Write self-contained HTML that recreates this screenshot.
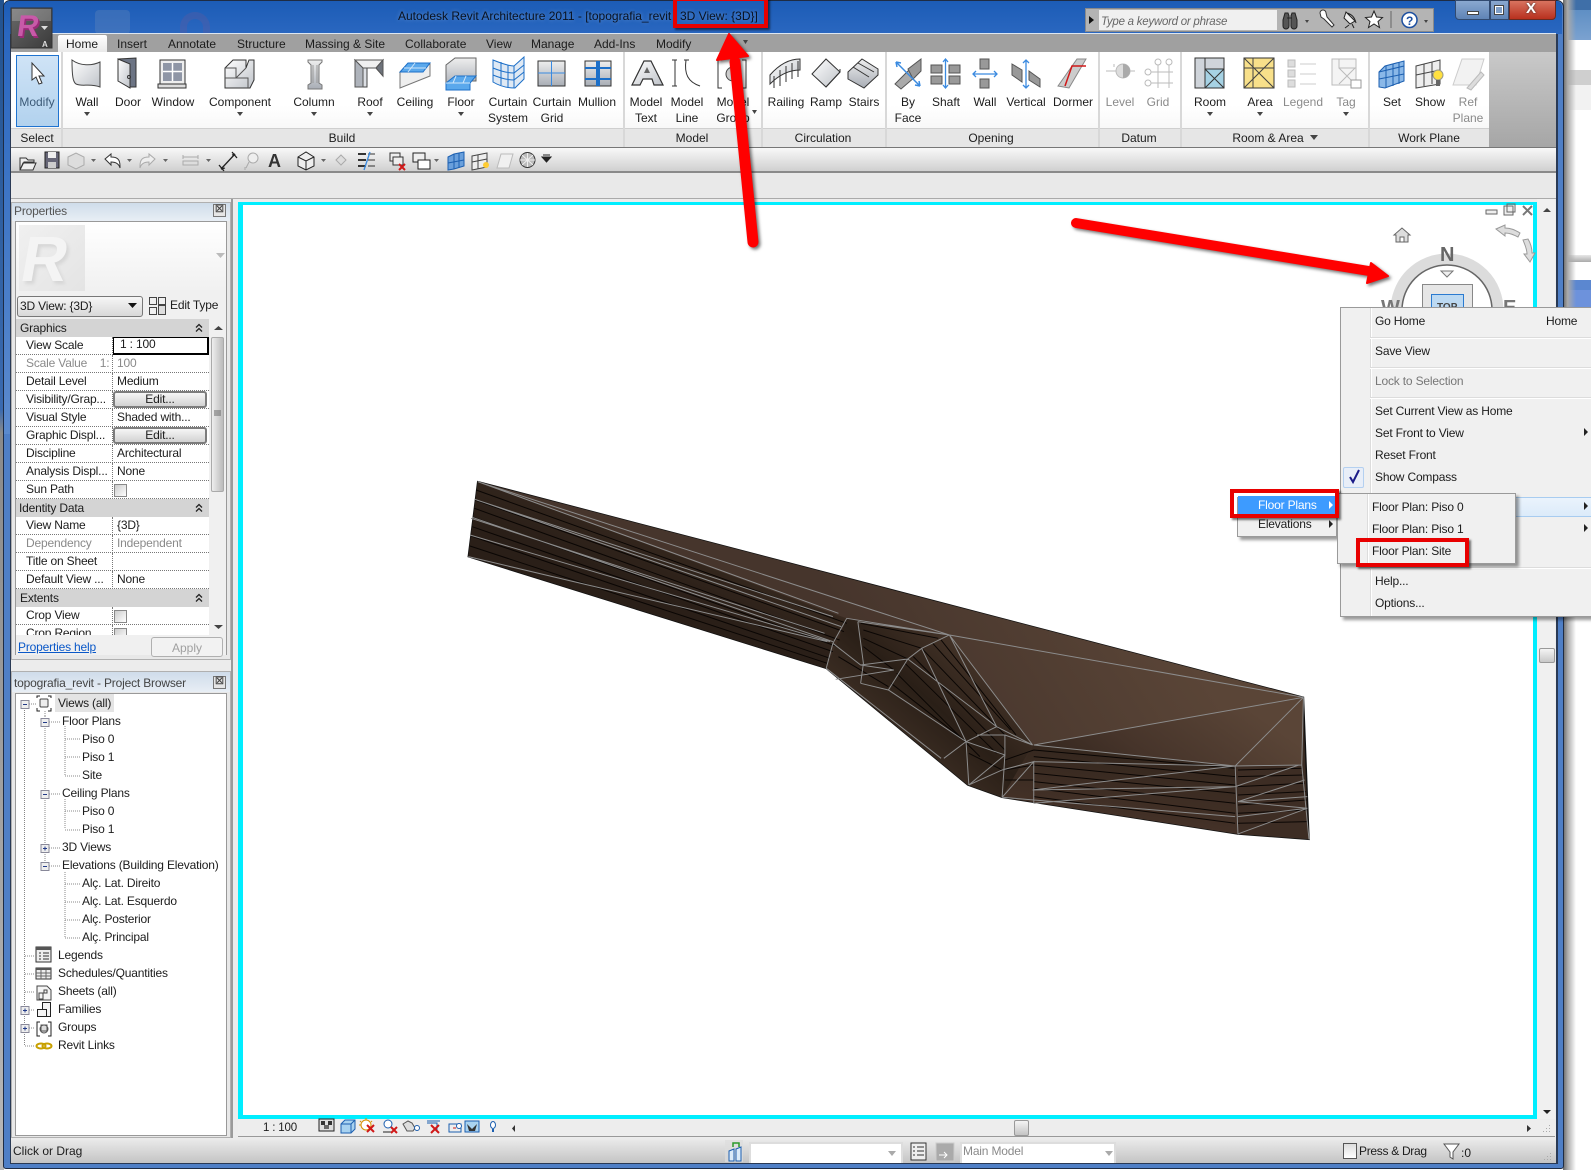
<!DOCTYPE html>
<html><head><meta charset="utf-8"><title>Revit</title>
<style>
html,body{margin:0;padding:0}
body{width:1591px;height:1170px;overflow:hidden;position:relative;background:#fff;font:12px/14px "Liberation Sans",sans-serif;color:#1c1c1c}
div,span,svg{position:absolute}
svg{left:0;top:0}
.t{white-space:nowrap}
.n{letter-spacing:-.18px}
.c{transform:translateX(-50%);text-align:center;white-space:nowrap}
.g{color:#8a8a8a}
.r{left:16px;width:193px;height:17px;border-bottom:1px dotted #777;background:#fff;letter-spacing:-.18px}
.r i{position:absolute;left:96px;top:0;height:18px;border-left:1px dotted #777}
.r .l{left:10px;top:1px;white-space:nowrap}
.r .v{left:101px;top:1px;white-space:nowrap}
.h{left:16px;width:193px;height:18px;background:#d4d4d4;letter-spacing:-.18px}
.h .l{left:4px;top:2px}
.e{left:97px;top:0;width:90px;height:13px;border:2px solid #7c7c7c;border-radius:3px;background:linear-gradient(#f6f6f6,#d2d2d2);text-align:center;line-height:13px}
.k{left:98px;top:3px;width:11px;height:11px;border:1px solid #888;background:linear-gradient(135deg,#ccc,#fff)}
.m{left:1375px;white-space:nowrap;letter-spacing:-.18px}
.s{left:1370px;width:221px;height:1px;background:#dcdcdc;border-bottom:1px solid #fff}
.rb{border:4px solid #e80000;box-shadow:2px 2px 2px rgba(0,0,0,.55);box-sizing:border-box}
</style></head><body>

<!-- right background window -->
<div style="left:1564px;top:0;width:27px;height:14px;background:#3f6fa8"></div>
<div style="left:1564px;top:10px;width:27px;height:30px;background:linear-gradient(#5f8fc4,#7ba2d0)"></div>
<div style="left:1564px;top:40px;width:27px;height:30px;background:#fff"></div>
<div style="left:1564px;top:70px;width:27px;height:15px;background:#cfcfcf"></div>
<div style="left:1564px;top:85px;width:27px;height:25px;background:#f2f2f2"></div>
<div style="left:1564px;top:255px;width:27px;height:7px;background:linear-gradient(#e8e8e8,#aaa)"></div>
<div style="left:1564px;top:280px;width:27px;height:10px;background:#5b87d0"></div>
<div style="left:1564px;top:290px;width:27px;height:18px;background:#6d92dc"></div>
<div style="left:1563px;top:0;width:13px;height:1170px;background:linear-gradient(90deg,#666,#aaa 35%,rgba(255,255,255,0))"></div>
<!-- left desktop -->
<div style="left:0;top:0;width:4px;height:1170px;background:linear-gradient(#23538f,#3a6ab0 35%,#8a8a8a 37%,#b8b8b8)"></div>

<!-- window frame -->
<div style="left:3px;top:0;width:1559px;height:1167px;background:#4f7fc6;border:1px solid #1e2c44;border-radius:7px 7px 3px 3px"></div>
<div style="left:4px;top:1px;width:1558px;height:33px;background:linear-gradient(#1c5cb6,#2a67c0);border-radius:6px 6px 0 0"></div>
<div style="left:4px;top:34px;width:7px;height:400px;background:linear-gradient(#2a67c0,#5b8ace)"></div>
<div style="left:1556px;top:34px;width:2px;height:1130px;background:#2a3a55"></div>
<div style="left:10px;top:34px;width:1px;height:1130px;background:#2a3a55"></div>
<div style="left:10px;top:1163px;width:1548px;height:1px;background:#2a3a55"></div>
<!-- glass ghosts -->
<div style="left:95px;top:10px;width:35px;height:24px;background:#6f8fb8;opacity:.3;border-radius:4px"></div>
<div style="left:180px;top:12px;width:30px;height:22px;border:7px solid #6a5a9a;border-bottom:0;border-radius:24px 24px 0 0;opacity:.3;box-sizing:border-box"></div>

<!-- title -->
<div class="t" style="left:398px;top:9px;color:#0a1220;text-shadow:0 0 4px rgba(120,165,220,.8)">Autodesk Revit Architecture 2011 - [topografia_revit</div>
<div class="t" style="left:680px;top:9px;color:#0a1220;text-shadow:0 0 4px rgba(120,165,220,.8)">3D View: {3D}]</div>

<!-- window controls -->
<div style="left:1455px;top:0;width:35px;height:20px;background:linear-gradient(#8aa8d0,#5f84b6);border:1px solid #314a70;box-sizing:border-box;border-radius:0 0 0 4px"></div>
<div style="left:1490px;top:0;width:19px;height:20px;background:linear-gradient(#8aa8d0,#5f84b6);border:1px solid #314a70;box-sizing:border-box"></div>
<div style="left:1509px;top:0;width:47px;height:20px;background:linear-gradient(#d8735f,#b8301e);border:1px solid #6a2a20;box-sizing:border-box;border-radius:0 0 4px 0"></div>
<div style="left:1467px;top:11px;width:10px;height:2px;background:#fff;border:1px solid #444"></div>
<div style="left:1495px;top:6px;width:6px;height:6px;border:1px solid #fff;outline:1px solid #444;background:#7f9fc8"></div>
<div class="t" style="left:1526px;top:2px;color:#fff;font-weight:bold;font-size:15px;text-shadow:0 0 2px #333">X</div>

<!-- search bar -->
<div style="left:1085px;top:8px;width:349px;height:24px;background:#b4b4b4;border:1px solid #8a8a8a;box-sizing:border-box"></div>
<div style="left:1099px;top:10px;width:178px;height:20px;background:#f0f0f0"></div>
<div class="t" style="left:1101px;top:15px;font-style:italic;font-size:11.5px;color:#666;letter-spacing:-.25px">Type a keyword or phrase</div>

<!-- tabs + ribbon -->
<div style="left:11px;top:33px;width:1545px;height:19px;background:#a0a0a0;border-top:1px solid #dce6f2;box-sizing:border-box"></div>
<div style="left:58px;top:35px;width:49px;height:18px;background:linear-gradient(#fff,#e8e8e8);border-radius:2px 2px 0 0"></div>
<div class="t" style="left:66px;top:37px">Home</div>
<div class="t" style="left:117px;top:37px">Insert</div>
<div class="t" style="left:168px;top:37px">Annotate</div>
<div class="t" style="left:237px;top:37px">Structure</div>
<div class="t" style="left:305px;top:37px">Massing &amp; Site</div>
<div class="t" style="left:405px;top:37px">Collaborate</div>
<div class="t" style="left:486px;top:37px">View</div>
<div class="t" style="left:531px;top:37px">Manage</div>
<div class="t" style="left:594px;top:37px">Add-Ins</div>
<div class="t" style="left:656px;top:37px">Modify</div>

<div style="left:11px;top:52px;width:1478px;height:76px;background:linear-gradient(#fff 70%,#f8f8f8)"></div>
<div style="left:11px;top:128px;width:1478px;height:19px;background:#e6e6e6;border-top:1px solid #cfcfcf;box-sizing:border-box"></div>
<div style="left:1489px;top:52px;width:67px;height:95px;background:linear-gradient(#c9c9c9,#a6a6a6)"></div>
<div style="left:61px;top:52px;width:2px;height:95px;background:#d8d8d8"></div>
<div style="left:623px;top:52px;width:2px;height:95px;background:#d8d8d8"></div>
<div style="left:761px;top:52px;width:2px;height:95px;background:#d8d8d8"></div>
<div style="left:885px;top:52px;width:2px;height:95px;background:#d8d8d8"></div>
<div style="left:1098px;top:52px;width:2px;height:95px;background:#d8d8d8"></div>
<div style="left:1180px;top:52px;width:2px;height:95px;background:#d8d8d8"></div>
<div style="left:1368px;top:52px;width:2px;height:95px;background:#d8d8d8"></div>
<div style="left:16px;top:55px;width:43px;height:72px;background:linear-gradient(#cfe3f6,#b2d2ee);border:1px solid #1f73d0;box-sizing:border-box"></div>

<!-- ribbon labels -->
<div class="c g" style="left:37px;top:95px;color:#3c5a78">Modify</div>
<div class="c" style="left:87px;top:95px">Wall</div>
<div class="c" style="left:128px;top:95px">Door</div>
<div class="c" style="left:173px;top:95px">Window</div>
<div class="c" style="left:240px;top:95px">Component</div>
<div class="c" style="left:314px;top:95px">Column</div>
<div class="c" style="left:370px;top:95px">Roof</div>
<div class="c" style="left:415px;top:95px">Ceiling</div>
<div class="c" style="left:461px;top:95px">Floor</div>
<div class="c" style="left:508px;top:95px">Curtain<br><span style="position:static;line-height:18px">System</span></div>
<div class="c" style="left:552px;top:95px">Curtain<br><span style="position:static;line-height:18px">Grid</span></div>
<div class="c" style="left:597px;top:95px">Mullion</div>
<div class="c" style="left:646px;top:95px">Model<br><span style="position:static;line-height:18px">Text</span></div>
<div class="c" style="left:687px;top:95px">Model<br><span style="position:static;line-height:18px">Line</span></div>
<div class="c" style="left:733px;top:95px">Model<br><span style="position:static;line-height:18px">Group</span></div>
<div class="c" style="left:786px;top:95px">Railing</div>
<div class="c" style="left:826px;top:95px">Ramp</div>
<div class="c" style="left:864px;top:95px">Stairs</div>
<div class="c" style="left:908px;top:95px">By<br><span style="position:static;line-height:18px">Face</span></div>
<div class="c" style="left:946px;top:95px">Shaft</div>
<div class="c" style="left:985px;top:95px">Wall</div>
<div class="c" style="left:1026px;top:95px">Vertical</div>
<div class="c" style="left:1073px;top:95px">Dormer</div>
<div class="c g" style="left:1120px;top:95px">Level</div>
<div class="c g" style="left:1158px;top:95px">Grid</div>
<div class="c" style="left:1210px;top:95px">Room</div>
<div class="c" style="left:1260px;top:95px">Area</div>
<div class="c g" style="left:1303px;top:95px">Legend</div>
<div class="c g" style="left:1346px;top:95px">Tag</div>
<div class="c" style="left:1392px;top:95px">Set</div>
<div class="c" style="left:1430px;top:95px">Show</div>
<div class="c g" style="left:1468px;top:95px">Ref<br><span style="position:static;line-height:18px">Plane</span></div>

<!-- panel titles -->
<div class="c" style="left:37px;top:131px">Select</div>
<div class="c" style="left:342px;top:131px">Build</div>
<div class="c" style="left:692px;top:131px">Model</div>
<div class="c" style="left:823px;top:131px">Circulation</div>
<div class="c" style="left:991px;top:131px">Opening</div>
<div class="c" style="left:1139px;top:131px">Datum</div>
<div class="c" style="left:1268px;top:131px">Room &amp; Area</div>
<div class="c" style="left:1429px;top:131px">Work Plane</div>

<!-- QAT and band -->
<div style="left:11px;top:147px;width:1545px;height:26px;background:linear-gradient(#f8f8f8,#d0d0d0);border-top:1px solid #777;border-bottom:2px solid #8a8a8a;box-sizing:border-box"></div>
<div style="left:11px;top:173px;width:1545px;height:26px;background:#e9e9e9;border-bottom:1px solid #aaa;box-sizing:border-box"></div>

<!-- main area -->
<div style="left:11px;top:199px;width:1545px;height:939px;background:#ececec"></div>
<div style="left:231px;top:199px;width:2px;height:939px;background:#9a9a9a"></div>
<div style="left:238px;top:202px;width:1299px;height:917px;background:#00eeff"></div>
<div style="left:243px;top:205px;width:1290px;height:910px;background:#fff"></div>
<!-- v scroll -->
<div style="left:1537px;top:199px;width:18px;height:920px;background:#f0f0f0"></div>
<div style="left:1539px;top:648px;width:14px;height:13px;background:linear-gradient(#f4f4f4,#c8c8c8);border:1px solid #999;border-radius:2px"></div>
<!-- h scroll -->
<div style="left:238px;top:1119px;width:1317px;height:18px;background:#ededed;border-bottom:1px solid #999;box-sizing:border-box"></div>
<div style="left:1014px;top:1120px;width:13px;height:14px;background:linear-gradient(#f4f4f4,#c4c4c4);border:1px solid #999;border-radius:2px"></div>
<div class="t n" style="left:263px;top:1121px;font-size:11.5px">1 : 100</div>

<!-- status bar -->
<div style="left:11px;top:1138px;width:1545px;height:25px;background:linear-gradient(#ececec,#c4c4c4)"></div>
<div class="t" style="left:13px;top:1144px">Click or Drag</div>
<div style="left:749px;top:1142px;width:154px;height:21px;background:#fff;border:2px solid #ddd;border-bottom:0;box-sizing:border-box"></div>
<div style="left:960px;top:1142px;width:156px;height:21px;background:#fff;border:2px solid #ddd;border-bottom:0;box-sizing:border-box"></div>
<div class="t g n" style="left:963px;top:1144px">Main Model</div>
<div style="left:1343px;top:1143px;width:12px;height:14px;background:linear-gradient(#ddd,#fff);border:1px solid #555"></div>
<div class="t" style="left:1359px;top:1144px;letter-spacing:-.3px">Press &amp; Drag</div>
<div class="t" style="left:1461px;top:1146px">:0</div>

<!-- properties panel -->
<div style="left:11px;top:202px;width:220px;height:458px;background:#e8e8e8;border:1px solid #b0b0b0;box-sizing:border-box"></div>
<div style="left:12px;top:203px;width:218px;height:18px;background:linear-gradient(#cfdcea,#e8eef5)"></div>
<div class="t n" style="left:14px;top:204px;color:#555">Properties</div>
<div style="left:213px;top:204px;width:11px;height:11px;border:1px solid #777;background:#e6e6e6;font:bold 10px/10px 'Liberation Sans';text-align:center;color:#444">☒</div>
<div style="left:15px;top:221px;width:212px;height:434px;background:#f0f0f0;border:1px solid #999;box-sizing:border-box"></div>
<div style="left:16px;top:222px;width:210px;height:71px;background:linear-gradient(#fff,#f0f0f0)"></div>
<div style="left:19px;top:225px;width:66px;height:66px;background:linear-gradient(135deg,#f0f0f0,#e4e4e4)"></div>
<div class="t" style="left:22px;top:226px;font:bold 64px/66px 'Liberation Sans';color:#f4f4f4;transform:skewX(-10deg);text-shadow:3px 3px 3px #d6d6d6">R</div>
<div style="left:17px;top:296px;width:126px;height:21px;background:linear-gradient(#f6f6f6,#d8d8d8);border:1px solid #777;border-radius:3px;box-sizing:border-box"></div>
<div class="t n" style="left:20px;top:299px">3D View: {3D}</div>
<div class="t n" style="left:170px;top:298px">Edit Type</div>

<div class="h" style="top:319px"><span class="l">Graphics</span></div>
<div class="r" style="top:337px"><i></i><span class="l">View Scale</span></div>
<div style="left:113px;top:337px;width:93px;height:15px;background:#fff;border:1px solid #000;border-width:1px 2px 2px 1px"><span class="t n" style="left:6px;top:-1px">1 : 100</span></div>
<div class="r g" style="top:355px"><i></i><span class="l">Scale Value &nbsp; &nbsp;1:</span><span class="v">100</span></div>
<div class="r" style="top:373px"><i></i><span class="l">Detail Level</span><span class="v">Medium</span></div>
<div class="r" style="top:391px"><i></i><span class="l">Visibility/Grap...</span><span class="e">Edit...</span></div>
<div class="r" style="top:409px"><i></i><span class="l">Visual Style</span><span class="v">Shaded with...</span></div>
<div class="r" style="top:427px"><i></i><span class="l">Graphic Displ...</span><span class="e">Edit...</span></div>
<div class="r" style="top:445px"><i></i><span class="l">Discipline</span><span class="v">Architectural</span></div>
<div class="r" style="top:463px"><i></i><span class="l">Analysis Displ...</span><span class="v">None</span></div>
<div class="r" style="top:481px"><i></i><span class="l">Sun Path</span><span class="k"></span></div>
<div class="h" style="top:499px"><span class="l" style="left:3px">Identity Data</span></div>
<div class="r" style="top:517px"><i></i><span class="l">View Name</span><span class="v">{3D}</span></div>
<div class="r g" style="top:535px"><i></i><span class="l">Dependency</span><span class="v">Independent</span></div>
<div class="r" style="top:553px"><i></i><span class="l">Title on Sheet</span></div>
<div class="r" style="top:571px"><i></i><span class="l">Default View ...</span><span class="v">None</span></div>
<div class="h" style="top:589px"><span class="l">Extents</span></div>
<div class="r" style="top:607px"><i></i><span class="l">Crop View</span><span class="k"></span></div>
<div class="n" style="left:16px;top:625px;width:193px;height:10px;overflow:hidden;background:#fff"><span style="left:96px;top:0;height:10px;border-left:1px dotted #777"></span><span class="t" style="left:10px;top:1px">Crop Region</span><span class="k"></span></div>
<!-- props scrollbar -->
<div style="left:209px;top:319px;width:17px;height:316px;background:#f0f0f0"></div>
<div style="left:211px;top:337px;width:13px;height:155px;background:linear-gradient(90deg,#eee,#bbb);border:1px solid #aaa;border-radius:2px;box-sizing:border-box"></div>
<div style="left:16px;top:635px;width:210px;height:20px;background:#f0f0f0"></div>
<div class="t n" style="left:18px;top:640px;color:#0a58c8;text-decoration:underline">Properties help</div>
<div style="left:151px;top:637px;width:72px;height:20px;background:#f2f2f2;border:1px solid #b0b0b0;border-radius:3px;box-sizing:border-box;text-align:center;color:#a0a0a0;line-height:20px">Apply</div>

<!-- project browser -->
<div style="left:11px;top:671px;width:220px;height:467px;background:#e8e8e8;border:1px solid #b0b0b0;box-sizing:border-box"></div>
<div style="left:12px;top:672px;width:218px;height:20px;background:linear-gradient(#cfdcea,#e8eef5)"></div>
<div class="t n" style="left:14px;top:676px;color:#444">topografia_revit - Project Browser</div>
<div style="left:213px;top:676px;width:11px;height:11px;border:1px solid #777;background:#e6e6e6;font:bold 10px/10px 'Liberation Sans';text-align:center;color:#444">☒</div>
<div style="left:15px;top:693px;width:212px;height:443px;background:#fff;border:1px solid #999;box-sizing:border-box"></div>
<div style="left:55px;top:694px;width:59px;height:18px;background:#e4e4e4"></div>
<div class="t n" style="left:58px;top:696px">Views (all)</div>
<div class="t n" style="left:62px;top:714px">Floor Plans</div>
<div class="t n" style="left:82px;top:732px">Piso 0</div>
<div class="t n" style="left:82px;top:750px">Piso 1</div>
<div class="t n" style="left:82px;top:768px">Site</div>
<div class="t n" style="left:62px;top:786px">Ceiling Plans</div>
<div class="t n" style="left:82px;top:804px">Piso 0</div>
<div class="t n" style="left:82px;top:822px">Piso 1</div>
<div class="t n" style="left:62px;top:840px">3D Views</div>
<div class="t n" style="left:62px;top:858px">Elevations (Building Elevation)</div>
<div class="t n" style="left:82px;top:876px">Alç. Lat. Direito</div>
<div class="t n" style="left:82px;top:894px">Alç. Lat. Esquerdo</div>
<div class="t n" style="left:82px;top:912px">Alç. Posterior</div>
<div class="t n" style="left:82px;top:930px">Alç. Principal</div>
<div class="t n" style="left:58px;top:948px">Legends</div>
<div class="t n" style="left:58px;top:966px">Schedules/Quantities</div>
<div class="t n" style="left:58px;top:984px">Sheets (all)</div>
<div class="t n" style="left:58px;top:1002px">Families</div>
<div class="t n" style="left:58px;top:1020px">Groups</div>
<div class="t n" style="left:58px;top:1038px">Revit Links</div>

<!-- icon overlay -->
<svg width="1591" height="1170" viewBox="0 0 1591 1170" fill="none">
<defs>
<linearGradient id="a" x1="0" y1="0" x2="1" y2="1"><stop offset="0" stop-color="#fff"/><stop offset="1" stop-color="#bfc3c9"/></linearGradient>
<linearGradient id="b" x1="0" y1="0" x2="0" y2="1"><stop offset="0" stop-color="#eee"/><stop offset="1" stop-color="#a8adb5"/></linearGradient>
<linearGradient id="p" x1="0" y1="0" x2="1" y2="1"><stop offset="0" stop-color="#6a6a6a"/><stop offset="1" stop-color="#3a3a3a"/></linearGradient>
</defs>
<!-- app button -->
<rect x="11" y="8" width="41" height="40" fill="url(#p)" stroke="#333"/>
<rect x="12" y="9" width="39" height="12" fill="#fff" opacity=".22"/>
<text x="15" y="38" font-family="Liberation Sans" font-size="30" font-weight="bold" fill="#9a2a78" transform="skewX(-8) translate(8 0)">R</text>
<text x="13" y="36" font-family="Liberation Sans" font-size="30" font-weight="bold" fill="#c85aa8" transform="skewX(-8) translate(8 0)">R</text>
<path d="M41 26h7l-3.500 4z" fill="#ddd"/>
<text x="42" y="47" font-family="Liberation Sans" font-size="8" font-weight="bold" fill="#ddd">A</text>
<!-- Modify cursor -->
<path d="M32 63v17l4-3 3 7 3-1-3-7h5z" fill="#fff" stroke="#333"/>
<!-- wall -->
<path d="M72 60c8 6 20 6 28 2v25c-10-4-18 0-24-3-3-2-4-8-4-24z" fill="url(#a)" stroke="#444"/>
<!-- door -->
<path d="M118 59l18-1v29h-6z" fill="#6c7484" stroke="#333"/><path d="M118 59l12 5v24l-12-7z" fill="url(#a)" stroke="#333"/><circle cx="129" cy="77" r="1.500" stroke="#333"/>
<!-- window -->
<rect x="160" y="60" width="25" height="24" fill="#eee" stroke="#333"/><rect x="163" y="63" width="19" height="18" fill="#8f96a6"/><path d="M172.500 63v18M163 71.500h19" stroke="#fff" stroke-width="1.500"/><rect x="158" y="84" width="28" height="4" fill="#ddd" stroke="#333"/>
<!-- component -->
<path d="M225 68l8-8h13v8l3-8h5v20l-4 8h-25z" fill="url(#a)" stroke="#333"/><path d="M225 68h11v10h-11M236 78l10-10M225 78h23v10" stroke="#555"/>
<!-- column -->
<path d="M308 60h14v2l-3 3v18l3 2v4h-14v-4l3-2V65l-3-3z" fill="url(#b)" stroke="#777"/><path d="M313 65v18M317 65v18" stroke="#999"/>
<!-- roof -->
<path d="M355 60h28v16l-7-8h-9v19h-12z" fill="#dcdfe4" stroke="#444"/><path d="M355 60l8 8v19h-8z" fill="#aeb3bb" stroke="#555"/><path d="M355 60h28l-7 8h-13z" fill="#f0f0f0" stroke="#555"/><path d="M383 60v16l-7-8z" fill="#6d727a" stroke="#555"/>
<!-- ceiling -->
<path d="M400 72l30-8v12l-30 12z" fill="#eee" stroke="#777"/><path d="M400 72l8-9h22l-7 9z" fill="#5aa8ec" stroke="#1c6fc8"/><path d="M415 63l-7 9M404 68h22" stroke="#cfe6fa"/>
<!-- floor -->
<path d="M446 65l9-7h21v23h-22l-8 6z" fill="url(#b)" stroke="#666"/><path d="M446 83l9-7h21l-6 7v7h-24z" fill="#5aa8ec" stroke="#1c6fc8"/><path d="M446 83h24M456 76l-3 7M466 76l-3 7" stroke="#cfe6fa"/>
<!-- curtain system -->
<path d="M493 60q15 6 21 6l10-9v22l-9 9q-12 0-22-6z" fill="#dfe9f4" stroke="#1c6fc8"/><path d="M493 68q12 5 21 5l10-8M493 75q12 5 21 5l10-8M501 62v23M508 65v23M514 66v22" stroke="#1c6fc8"/>
<!-- curtain grid -->
<rect x="538" y="61" width="27" height="25" fill="url(#b)" stroke="#333"/><path d="M551.500 61v25M538 73h27" stroke="#3a8ae0"/>
<!-- mullion -->
<rect x="585" y="61" width="26" height="25" fill="url(#b)" stroke="#333"/><path d="M585 68h26M585 79h26" stroke="#1c6fc8" stroke-width="2"/><path d="M598 61v25" stroke="#1c6fc8" stroke-width="4"/>
<!-- model text -->
<path d="M632 85l12-24h7l12 24h-9l-2-6h-9l-3 6z" fill="url(#a)" stroke="#333" stroke-width="1.200"/><path d="M644 73l3-6 3 6z" fill="#666"/>
<!-- model line -->
<path d="M675 60v26M686 60c-2 14 2 22 14 26" stroke="#333"/><path d="M672 60h5M672 86h5M684 60h5" stroke="#333"/>
<!-- model group -->
<path d="M722 60h-4v28h4M742 60h4v28h-4" stroke="#333"/><circle cx="733" cy="74" r="7" fill="#ccc" stroke="#444"/>
<!-- railing -->
<path d="M770 75q14-16 30-16v11q-16 0-30 14z" fill="url(#a)" stroke="#333"/><path d="M774 76v12M780 70v16M786 66v16M792 63v16M798 61v16" stroke="#333"/>
<!-- ramp -->
<path d="M812 74l14-15 14 13-14 15z" fill="url(#a)" stroke="#333"/><path d="M826 87l14-15v-3" stroke="#333"/>
<!-- stairs -->
<path d="M848 72l14-13 16 10v6l-14 13-16-9z" fill="url(#b)" stroke="#333"/><path d="M853 67l16 10M858 63l16 9" stroke="#333"/>
<!-- by face -->
<path d="M895 84l14-14 6 7-14 12z" fill="#aaa" stroke="#555"/><path d="M908 69l13-10v12l-8 8z" fill="#999" stroke="#555"/><path d="M896 62l24 24M896 62l5 1M896 62l1 5M920 86l-5-1M920 86l-1-5" stroke="#3a8ae0" stroke-width="1.500"/>
<!-- shaft -->
<path d="M945.500 59v29M943 62l2.500-3 2.500 3M943 85l2.500 3 2.500-3" stroke="#3a8ae0" stroke-width="1.300"/><rect x="931" y="65" width="11" height="8" fill="#999" stroke="#555"/><rect x="949" y="65" width="11" height="8" fill="#999" stroke="#555"/><rect x="931" y="76" width="11" height="8" fill="#999" stroke="#555"/><rect x="949" y="76" width="11" height="8" fill="#999" stroke="#555"/>
<!-- wall opening -->
<rect x="980" y="59" width="9" height="10" fill="#999" stroke="#555"/><rect x="980" y="79" width="9" height="9" fill="#999" stroke="#555"/><path d="M973 74h24M976 71l-3 3 3 3M994 71l3 3-3 3" stroke="#3a8ae0" stroke-width="1.300"/>
<!-- vertical -->
<path d="M1012 64l10 6v12l-10-7zM1029 71l11 8v8l-11-7z" fill="#999" stroke="#555"/><path d="M1026 60v28M1023 63l3-3 3 3M1023 85l3 3 3-3" stroke="#3a8ae0" stroke-width="1.300"/>
<!-- dormer -->
<path d="M1058 86l19-27h9l-17 29z" fill="#ccc" stroke="#888"/><path d="M1065 86l7-20h14" stroke="#d01818" stroke-width="1.500"/>
<!-- level -->
<path d="M1106 71h12M1128 71h7M1114 64v3" stroke="#bbb"/><circle cx="1123" cy="71" r="7" fill="#ddd" stroke="#bbb"/><path d="M1123 64a7 7 0 010 14z" fill="#aaa"/>
<!-- grid -->
<g stroke="#bbb"><circle cx="1158" cy="62" r="3"/><circle cx="1169" cy="62" r="3"/><circle cx="1148" cy="72" r="3"/><circle cx="1148" cy="83" r="3"/><path d="M1158 65v23M1169 65v23M1151 72h22M1151 83h22"/></g>
<!-- room -->
<rect x="1195" y="58" width="29" height="30" fill="#cfd4da" stroke="#333"/><rect x="1205" y="69" width="19" height="19" fill="#a6d2e4" stroke="#333"/><path d="M1205 58v11M1205 69l19 19M1224 69l-19 19M1198 88h7" stroke="#333"/>
<!-- area -->
<rect x="1244" y="58" width="30" height="30" fill="#f8e08a" stroke="#333"/><path d="M1244 58l30 30M1274 58l-30 30M1253 58v30M1244 68h30" stroke="#444"/>
<!-- legend -->
<g fill="#ddd" stroke="#bbb"><rect x="1288" y="60" width="7" height="7"/><rect x="1288" y="70" width="7" height="7"/><rect x="1288" y="80" width="7" height="7"/></g><path d="M1300 64h16M1300 74h16M1300 84h16" stroke="#ccc"/>
<!-- tag -->
<rect x="1332" y="59" width="24" height="26" fill="#f4f4f4" stroke="#bbb"/><path d="M1339 59v9h17M1339 68l16 16M1355 68l-16 16" stroke="#bbb"/><rect x="1351" y="80" width="10" height="8" fill="#fff" stroke="#999"/>
<!-- set -->
<path d="M1379 72l6-6 19-5v20l-19 7-6-1z" fill="#8ab8e8" stroke="#1c5fb0"/><path d="M1379 79l25-5M1379 72l25-6M1386 66v22M1393 64v22M1399 62v22" stroke="#1c5fb0"/>
<!-- show -->
<path d="M1416 66l24-6v24l-24 4z" fill="#eee" stroke="#444"/><path d="M1416 75l24-5M1424 64v22M1432 62v22" stroke="#444"/><circle cx="1438" cy="75" r="5" fill="#ffe040" stroke="#998"/><rect x="1436" y="80" width="4" height="6" fill="#666"/>
<!-- ref plane -->
<path d="M1453 85l9-26h22l-8 26z" fill="#f2f2f2" stroke="#ccc"/><path d="M1467 88l14-16 3 3-13 15z" fill="#ddd" stroke="#bbb"/>
<!-- small arrows -->
<g fill="#444"><path d="M84 112h6l-3 4zM237 112h6l-3 4zM311 112h6l-3 4zM367 112h6l-3 4zM458 112h6l-3 4zM752 110h5l-2.500 4zM1207 112h6l-3 4zM1257 112h6l-3 4zM1343 112h6l-3 4zM1310 135h8l-4 5zM743 40h5l-2.500 4z"/></g>

<!-- QAT -->
<path d="M20 158h6l2 2h6v2h-10l-4 8zM20 170l3-7h13l-3 7z" fill="#eee" stroke="#333"/>
<rect x="45" y="152" width="14" height="16" fill="#667" stroke="#222"/><rect x="48" y="152" width="8" height="6" fill="#eee"/><rect x="48" y="162" width="8" height="6" fill="#ccc"/>
<path d="M68 157l8-4 8 4v8l-8 4-8-4z" fill="#ddd" stroke="#aaa"/>
<path d="M105 159l6-5v3c6 0 9 2 9 9v2c-1-4-4-6-9-6v3z" fill="#fff" stroke="#333"/>
<path d="M155 159l-6-5v3c-6 0-9 2-9 9v2c1-4 4-6 9-6v3z" fill="#eee" stroke="#aaa"/>
<g fill="#666"><path d="M91 159h5l-2.500 3zM127 159h5l-2.500 3zM163 159h5l-2.500 3zM206 159h5l-2.500 3zM321 159h5l-2.500 3zM434 159h5l-2.500 3z"/></g>
<path d="M183 155v4M198 155v4M183 157h15" stroke="#aaa"/><rect x="183" y="161" width="15" height="4" fill="#ddd" stroke="#aaa"/>
<path d="M221 169l14-15M219 165l5 6M232 152l5 6" stroke="#222" stroke-width="1.300"/><path d="M224 166l-2 3 3-1M233 156l2-2-3 1" stroke="#222"/>
<circle cx="253" cy="158" r="5" fill="#eee" stroke="#aaa"/><path d="M249 162l-3 6M245 167v3" stroke="#aaa"/>
<text x="268" y="167" font-family="Liberation Sans" font-size="18" font-weight="bold" fill="#333">A</text>
<path d="M298 157l8-5 8 5v9l-8 4-8-4z" fill="#eee" stroke="#222"/><path d="M298 157l8 4 8-4M306 161v9" stroke="#222"/>
<path d="M336 160l5-5 5 5-5 5z" fill="#ddd" stroke="#aaa"/>
<path d="M358 154h8M358 160h8M358 166h8" stroke="#333" stroke-width="2"/><path d="M368 154h7M368 160h7M368 166h7" stroke="#333"/><path d="M370 152l-6 18" stroke="#3a8ae0" stroke-width="1.300"/>
<rect x="390" y="153" width="10" height="8" fill="#eee" stroke="#333"/><rect x="393" y="157" width="10" height="8" fill="#eee" stroke="#333"/><path d="M399 164l6 6M405 164l-6 6" stroke="#d01818" stroke-width="2"/>
<rect x="413" y="153" width="12" height="9" fill="#eee" stroke="#222"/><rect x="418" y="160" width="12" height="9" fill="#fff" stroke="#222"/>
<path d="M448 157l6-3 10-2v14l-10 3-6 1z" fill="#6aa0dc" stroke="#1c5fb0"/><path d="M448 163l16-3M454 154v15M459 153v15" stroke="#1c5fb0"/>
<path d="M472 156l15-3v14l-15 3z" fill="#eee" stroke="#444"/><path d="M472 162l15-3M478 155v14" stroke="#444"/><circle cx="486" cy="165" r="3" fill="#fc3"/>
<path d="M497 168l4-14h12l-4 14z" fill="#f0f0f0" stroke="#bbb"/>
<circle cx="527.500" cy="160" r="7.500" fill="#bbb" stroke="#333"/><path d="M522 155l11 10M533 155l-11 10M520 160h15M527.500 153v14" stroke="#eee"/>
<path d="M543 155h7M542 157h9l-4.500 5z" fill="#222" stroke="#222"/>

<!-- search icons -->
<path d="M1285 13h3l1 3v10a2.500 2.500 0 01-6 0v-6zM1292 13h3l2 7v6a2.500 2.500 0 01-6 0V16z" fill="#555" stroke="#222"/><path d="M1287 18h5" stroke="#222"/><path d="M1305 20h4l-2 3zM1424 20h4l-2 3z" fill="#444"/>
<path d="M1320 13a3 3 0 016 0l1 4 7 8-2 2-8-8-3-2z" fill="#fff" stroke="#333"/>
<path d="M1346 13q8 1 10 10M1349 25l-4 3M1352 24l2 4M1348 13l3 7" stroke="#222" fill="none"/><path d="M1346 12l9 9-5 3-6-6z" fill="#eee" stroke="#222"/>
<path d="M1374 11l2.500 6 6 .5-4.500 4 1.500 6-5.500-3.500-5.500 3.500 1.500-6-4.500-4 6-.5z" fill="#fff" stroke="#222"/>
<path d="M1391 11v17" stroke="#666"/>
<circle cx="1409.500" cy="20" r="7.500" fill="#fff" stroke="#1c4fa0" stroke-width="1.500"/><text x="1406" y="25" font-family="Liberation Sans" font-size="12" font-weight="bold" fill="#1c4fa0">?</text>
<path d="M1089 16l5 4-5 4z" fill="#111"/>

<!-- props small -->
<path d="M216 253h9l-4.500 5z" fill="#bbb"/>
<path d="M128 303h9l-4.500 5z" fill="#111"/>
<g fill="none" stroke="#444"><rect x="149.500" y="297.500" width="7" height="7"/><rect x="149.500" y="307.500" width="7" height="7"/><rect x="158.500" y="297.500" width="7" height="7"/><rect x="158.500" y="305.500" width="7" height="9" fill="#ddd"/></g>
<path d="M214 330h9l-4.500-4zM214 625h9l-4.500 4z" fill="#444"/>
<path d="M214 411h7M214 413h7M214 415h7" stroke="#666"/>
<path d="M196 327.500l3-3 3 3M196 331.500l3-3 3 3M196 507.500l3-3 3 3M196 511.500l3-3 3 3M196 597.500l3-3 3 3M196 601.500l3-3 3 3" stroke="#222" stroke-width="1.300"/>

<!-- tree lines -->
<g stroke="#888" stroke-dasharray="1 1">
<path d="M24.500 708v337M45 716v150M65 726v50M65 799v30M65 872v66"/>
<path d="M29 704h7M49 722h12M49 794h12M49 848h12M49 866h12M65 739h15M65 757h15M65 776h15M65 811h15M65 830h15M65 884h15M65 902h15M65 920h15M65 938h15M25 956h10M25 974h10M25 992h10M29 1010h6M29 1028h6M25 1046h10M45 716v-6"/>
</g>
<g fill="#eee" stroke="#889"><rect x="21" y="700.500" width="8" height="8"/><rect x="41" y="718.500" width="8" height="8"/><rect x="41" y="790.500" width="8" height="8"/><rect x="41" y="844.500" width="8" height="8"/><rect x="41" y="862.500" width="8" height="8"/><rect x="21" y="1006.500" width="8" height="8"/><rect x="21" y="1024.500" width="8" height="8"/></g>
<path d="M23 704.500h4M43 722.500h4M43 794.500h4M43 848.500h4M45 846.500v4M43 866.500h4M23 1010.500h4M25 1008.500v4M23 1028.500h4M25 1026.500v4" stroke="#223a88"/>
<!-- tree icons -->
<path d="M37 698v-2h3M48 696h3v2M37 708v3h3M48 711h3v-3" stroke="#222"/><rect x="40" y="699" width="8" height="8" rx="1" fill="#eee" stroke="#444"/>
<rect x="36" y="947" width="15" height="15" fill="#eee" stroke="#333"/><rect x="36" y="947" width="15" height="3" fill="#555"/><path d="M39 953h2M43 953h6M39 956h2M43 956h6M39 959h2M43 959h6" stroke="#333"/>
<rect x="36" y="968" width="15" height="11" fill="#eee" stroke="#333"/><rect x="36" y="968" width="15" height="2" fill="#555"/><path d="M36 973h15M36 976h15M41 970v9M46 970v9" stroke="#666"/>
<path d="M37 986h10l4 4v10H37z" fill="#f4f4f4" stroke="#444"/><rect x="39" y="993" width="4" height="6" stroke="#444"/><rect x="44" y="990" width="3" height="3" stroke="#444"/>
<path d="M42.500 1002.500h8v14h-13v-7h5z" fill="#f4f4f4" stroke="#222"/><path d="M37.500 1009.500h5v-7M42.500 1009.500h4v7" stroke="#222"/>
<path d="M40 1022h-3v14h3M48 1022h3v14h-3" stroke="#222"/><circle cx="44" cy="1029" r="4" fill="#ddd" stroke="#555"/><rect x="41" y="1025" width="6" height="6" stroke="#555"/>
<ellipse cx="41" cy="1046" rx="4.500" ry="2.500" stroke="#c8a000" stroke-width="2"/><ellipse cx="47" cy="1046" rx="4.500" ry="2.500" stroke="#c8a000" stroke-width="2"/>

<!-- viewport bottom icons -->
<g transform="translate(319 1119)">
<rect x="0" y="0" width="15" height="12" fill="#ddd" stroke="#222"/><rect x="2" y="2" width="4" height="4" fill="#333"/><rect x="9" y="2" width="4" height="4" fill="#333"/><rect x="5" y="6" width="5" height="4" fill="#666"/>
<path d="M22 5l4-4h10v9l-4 4H22z" fill="#a8d2f0" stroke="#1c5fb0"/><path d="M22 5h10v9M32 5l4-4" stroke="#1c5fb0"/>
<circle cx="47" cy="6" r="5" fill="#fff" stroke="#d89000"/><path d="M47-1v2M41 2l1 1M53 2l-1 1M40 6h2" stroke="#d89000"/><path d="M48 6l7 7M55 6l-7 7" stroke="#d01818" stroke-width="2"/>
<circle cx="69" cy="5" r="4" fill="#fff" stroke="#1c5fb0"/><path d="M64 13h9" stroke="#222"/><path d="M72 8l6 6M78 8l-6 6" stroke="#d01818" stroke-width="2"/>
<path d="M84 5l5-3 4 2 3 5-2 3h-6z" fill="#ddd" stroke="#555"/><circle cx="98" cy="9" r="2.500" stroke="#1c5fb0" fill="#fff"/>
<path d="M108 4h10v9M108 2h13" stroke="#1c5fb0"/><path d="M112 6l8 8M120 6l-8 8" stroke="#d01818" stroke-width="2"/>
<path d="M130 5h12v8h-12z" stroke="#1c5fb0" fill="none"/><circle cx="140" cy="7" r="2.500" fill="#fff" stroke="#1c5fb0"/><path d="M134 9h3" stroke="#d01818"/>
<rect x="146" y="2" width="14" height="11" fill="#a8d2f0" stroke="#1c5fb0"/><path d="M148 5l5 5 5-5-2 7h-6z" fill="#333"/>
<ellipse cx="174" cy="6" rx="2.500" ry="3.500" fill="#fff" stroke="#1c5fb0"/><path d="M173 10h2v3h-2z" fill="#1c5fb0"/>
</g>
<path d="M515 1125v7l-3-3.500z" fill="#333"/>
<path d="M1527 1125v7l4-3.500z" fill="#333"/>
<path d="M1543 1110h8l-4 4z" fill="#222"/><path d="M1543 212h8l-4-4z" fill="#444"/>
<g fill="#aaa"><rect x="1549" y="1131" width="1" height="1"/><rect x="1546" y="1131" width="1" height="1"/><rect x="1543" y="1131" width="1" height="1"/><rect x="1549" y="1128" width="1" height="1"/><rect x="1546" y="1128" width="1" height="1"/><rect x="1549" y="1125" width="1" height="1"/><rect x="1550" y="1159" width="1" height="1"/><rect x="1547" y="1159" width="1" height="1"/><rect x="1544" y="1159" width="1" height="1"/><rect x="1550" y="1156" width="1" height="1"/><rect x="1547" y="1156" width="1" height="1"/><rect x="1550" y="1153" width="1" height="1"/></g>

<!-- status icons -->
<rect x="725" y="1140" width="18" height="22" fill="#ddd" opacity=".7"/>
<path d="M729 1151l5-2v12h-5zM736 1149l5-2v14h-5z" fill="#dbeaf8" stroke="#1c5fb0"/><path d="M733 1147v-4h6v4" stroke="#2a9a2a" stroke-width="1.500"/>
<path d="M888 1151h8l-4 5z" fill="#aaa"/><path d="M1105 1151h8l-4 5z" fill="#aaa"/>
<rect x="911" y="1143" width="15" height="17" fill="#eee" stroke="#333"/><path d="M913 1147h2M917 1147h7M913 1151h2M917 1151h7M913 1155h2M917 1155h7" stroke="#333"/>
<rect x="936" y="1143" width="18" height="18" fill="#aaa" stroke="#ccc"/><path d="M939 1155h8M944 1152l3 3-3 3" stroke="#fff"/>
<path d="M1444 1144h15l-6 8v7l-3-2v-5z" fill="#fff" stroke="#555"/>
</svg>

<!-- 3D terrain -->
<svg width="1591" height="1170" viewBox="0 0 1591 1170" fill="none">
<defs>
<linearGradient id="s1" gradientUnits="userSpaceOnUse" x1="230" y1="300" x2="360" y2="110"><stop offset="0" stop-color="#2a1f18"/><stop offset=".52" stop-color="#33261d"/><stop offset=".72" stop-color="#503c2e"/><stop offset="1" stop-color="#5a4536"/></linearGradient>
<linearGradient id="s2" gradientUnits="userSpaceOnUse" x1="800" y1="700" x2="1300" y2="500"><stop offset="0" stop-color="#46352c"/><stop offset="1" stop-color="#5a4537"/></linearGradient>
<linearGradient id="s3" gradientUnits="userSpaceOnUse" x1="1050" y1="1000" x2="1400" y2="700"><stop offset="0" stop-color="#2a1f18"/><stop offset=".5" stop-color="#46342a"/><stop offset="1" stop-color="#5a4537"/></linearGradient>
<linearGradient id="s4" gradientUnits="userSpaceOnUse" x1="700" y1="800" x2="1000" y2="600"><stop offset="0" stop-color="#45352a"/><stop offset=".5" stop-color="#2a1f17"/><stop offset="1" stop-color="#4a382c"/></linearGradient>
<linearGradient id="s5" gradientUnits="userSpaceOnUse" x1="1200" y1="1100" x2="1250" y2="870"><stop offset="0" stop-color="#463329"/><stop offset="1" stop-color="#33261d"/></linearGradient>
</defs>
<g transform="translate(450 460) scale(.5549 .3333)">
<polygon points="50,65 33,290 678,625 933,975 995,1012 1420,1122 1548,1138 1538,712" fill="#3a2b22" stroke="#111" stroke-width="1.500" vector-effect="non-scaling-stroke"/>
<polygon points="50,65 33,290 678,625 690,550 715,475 900,525" fill="url(#s1)"/>
<polygon points="50,65 1538,712 1052,855 900,525 715,475" fill="url(#s2)"/>
<polygon points="900,525 1538,712 1052,855" fill="url(#s2)"/>
<polygon points="715,475 900,525 1050,855 995,1012 933,975 678,625" fill="url(#s4)"/>
<polygon points="1052,855 1538,712 1535,915 1415,918" fill="url(#s3)"/>
<polygon points="1052,855 1415,918 1420,1122 995,1012" fill="url(#s5)"/>
<polygon points="1415,918 1535,915 1548,1138 1420,1122" fill="#3d2d24"/>
<g stroke="#0a0604" stroke-width="1" vector-effect="non-scaling-stroke" fill="none">
<path vector-effect="non-scaling-stroke" d="M47 90L715 490M45 120L710 515M44 145L702 540M42 172L695 558M40 200L690 575M38 228L685 595M36 258L680 610M740 490L880 535M745 510L850 565M745 535L825 597M745 560L800 630M700 590L790 680M850 565L1000 825M870 550L1010 810M885 540L1020 825M835 590L1000 870M820 610L985 880M805 640L955 890M795 670L930 845M940 850L1000 885M935 880L995 930M1052 870L1415 925M1052 890L1415 950M1052 915L1415 975M1052 940L1415 1000M1052 965L1415 1030M1052 985L1415 1060M1052 1010L1415 1090M1000 900L1052 870M1000 930L1052 915M1000 960L1052 960M1420 930L1535 925M1420 950L1538 945M1420 980L1540 970M1420 1005L1542 995M1420 1035L1544 1020M1420 1060L1545 1050M1420 1090L1546 1085"/>
</g>
<g stroke="#8c8c8c" stroke-width="1" fill="none">
<path vector-effect="non-scaling-stroke" d="M50 65L900 525M50 65L700 460M45 118L705 500M40 172L690 545M36 225L685 545M33 290L680 545M38 175L675 520M48 120L690 470M900 525L1538 712M1538 712L1052 855M1538 712L1415 918M1538 712L1535 915M900 525L1050 855M900 525L985 800M715 475L900 525M735 485L900 525M715 475L690 550L678 625M735 485L745 610L740 670M690 550L740 615L825 597M740 615L800 630M695 658L800 630M740 670L790 690M678 625L885 895M790 690L825 597L850 565L900 525M790 690L930 845M850 565L930 845M825 597L985 800M930 845L985 800L1050 855M930 845L890 895M930 845L1000 885L1000 825M950 825L1000 825L1050 855M935 975L1000 885M935 975L995 930L1052 905M930 845L935 975M1000 885L995 1012M995 1012L1052 905L1052 1030M1052 855L1415 918M1052 905L1415 918M1050 990L1415 918M1050 990L1415 980M1052 1030L1415 980M995 1012L1415 1070M1420 1122L1415 918M1415 918L1535 915M1415 980L1530 915M1420 1025L1540 960M1420 1025L1545 1010M1420 1025L1545 1045M1420 1070L1545 1045M1420 1122L1545 1045M1535 915L1548 1138"/>
</g>
</g>
</svg>

<!-- viewport controls + viewcube -->
<svg width="1591" height="1170" viewBox="0 0 1591 1170" fill="none">
<rect x="1486" y="210" width="11" height="4" fill="#eee" stroke="#666"/>
<rect x="1504" y="206" width="9" height="9" fill="#eee" stroke="#666"/><rect x="1507" y="204" width="8" height="8" stroke="#666"/>
<path d="M1523 206l9 9M1532 206l-9 9" stroke="#777" stroke-width="2"/>
<path d="M1402 228l-8 7h2v7h12v-7h2z" fill="#ddd" stroke="#666"/><rect x="1400" y="237" width="4" height="5" fill="#fff" stroke="#666"/>
<circle cx="1447" cy="310" r="51" stroke="#dcdcdc" stroke-width="11"/>
<circle cx="1447" cy="310" r="45" stroke="#666" stroke-width="1.500"/>
<text x="1440" y="261" font-family="Liberation Sans" font-size="20" font-weight="bold" fill="#666">N</text>
<path d="M1441 271h12l-6 6z" fill="#eee" stroke="#777"/>
<rect x="1422.500" y="284.500" width="50" height="40" fill="#e6e6e6" stroke="#888"/>
<rect x="1431.500" y="294.500" width="32" height="30" fill="#bcd9f2" stroke="#2a7ad0"/>
<text x="1437" y="310" font-family="Liberation Sans" font-size="10" font-weight="bold" fill="#444">TOP</text>
<text x="1381" y="314" font-family="Liberation Sans" font-size="20" font-weight="bold" fill="#777">W</text>
<text x="1503" y="314" font-family="Liberation Sans" font-size="20" font-weight="bold" fill="#777">E</text>
<path d="M1496 229l9-4v3c6 0 10 2 15 5l-2 4c-4-2-8-4-13-4v3z" fill="#ddd" stroke="#999"/>
<path d="M1523 240l5-1c3 5 4 10 4 14l3 0-5 9-6-8h3c0-5-2-9-4-14z" fill="#ddd" stroke="#999"/>
</svg>

<!-- context menu -->
<div style="left:1340px;top:307px;width:260px;height:310px;background:#f0f0f0;border:1px solid #9a9a9a;box-sizing:border-box;box-shadow:3px 3px 3px rgba(0,0,0,.4)"></div>
<div style="left:1370px;top:308px;width:1px;height:308px;background:#dcdcdc;border-right:1px solid #fff"></div>
<div class="m" style="top:314px">Go Home</div>
<div class="t" style="left:1546px;top:314px;letter-spacing:-.18px">Home</div>
<div class="s" style="top:337px"></div>
<div class="m" style="top:344px">Save View</div>
<div class="s" style="top:367px"></div>
<div class="m g" style="top:374px;color:#777">Lock to Selection</div>
<div class="s" style="top:397px"></div>
<div class="m" style="top:404px">Set Current View as Home</div>
<div class="m" style="top:426px">Set Front to View</div>
<div class="m" style="top:448px">Reset Front</div>
<div class="m" style="top:470px">Show Compass</div>
<div style="left:1343px;top:467px;width:21px;height:21px;background:#e8eef8;border:1px solid #b4d0f0;border-radius:2px;box-sizing:border-box"></div>
<div style="left:1516px;top:497px;width:75px;height:20px;background:linear-gradient(#eaf3fc,#dcebfa);border-top:1px solid #a8ccf0;border-bottom:1px solid #a8ccf0;box-sizing:border-box"></div>
<div class="s" style="top:567px"></div>
<div class="m" style="top:574px">Help...</div>
<div class="m" style="top:596px">Options...</div>

<!-- left mini menu -->
<div style="left:1237px;top:497px;width:100px;height:40px;background:#f0f0f0;border:1px solid #9a9a9a;box-sizing:border-box;box-shadow:3px 3px 3px rgba(0,0,0,.4)"></div>
<div style="left:1238px;top:496px;width:99px;height:18px;background:#3d9bff"></div>
<div class="t n" style="left:1258px;top:498px;color:#fff">Floor Plans</div>
<div class="t n" style="left:1258px;top:517px">Elevations</div>

<!-- submenu -->
<div style="left:1337px;top:493px;width:179px;height:71px;background:#f0f0f0;border:1px solid #9a9a9a;box-sizing:border-box;box-shadow:3px 3px 3px rgba(0,0,0,.4)"></div>
<div style="left:1367px;top:494px;width:1px;height:69px;background:#dcdcdc;border-right:1px solid #fff"></div>
<div class="t n" style="left:1372px;top:500px">Floor Plan: Piso 0</div>
<div class="t n" style="left:1372px;top:522px">Floor Plan: Piso 1</div>
<div class="t n" style="left:1372px;top:544px">Floor Plan: Site</div>

<!-- red boxes -->
<div class="rb" style="left:673px;top:-3px;width:95px;height:31px"></div>
<div class="rb" style="left:1230px;top:489px;width:109px;height:29px"></div>
<div class="rb" style="left:1356px;top:538px;width:113px;height:29px"></div>

<!-- menu glyphs + red arrows -->
<svg width="1591" height="1170" viewBox="0 0 1591 1170" fill="none">
<path d="M1350 477l3 5 6-12" stroke="#1a1a88" stroke-width="2"/>
<g fill="#222"><path d="M1584 428l4 4-4 4zM1584 502l4 4-4 4zM1584 524l4 4-4 4zM1329 520l4 4-4 4z"/></g>
<path d="M1329 501l4 4-4 4z" fill="#fff"/>
<g style="filter:drop-shadow(2px 2px 1.500px rgba(0,0,0,.55))">
<path d="M753 242L735 62" stroke="#f00" stroke-width="11" stroke-linecap="round"/>
<path d="M729 34L717 60 748 56z" fill="#f00" stroke="#f00" stroke-width="2" stroke-linejoin="round"/>
<path d="M1076 223L1375 272" stroke="#f00" stroke-width="10" stroke-linecap="round"/>
<path d="M1388 276L1371 263 1367 283z" fill="#f00" stroke="#f00" stroke-width="2" stroke-linejoin="round"/>
</g>
</svg>
</body></html>
